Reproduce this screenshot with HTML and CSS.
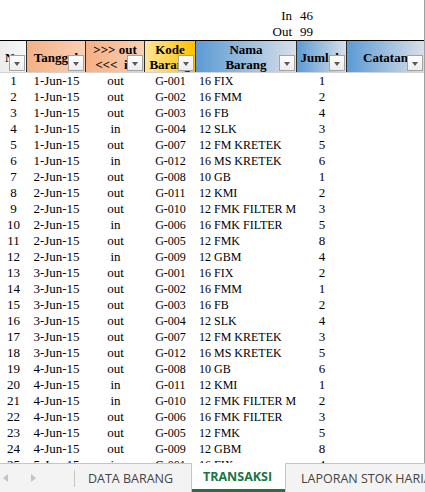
FILE: index.html
```html
<!DOCTYPE html>
<html>
<head>
<meta charset="utf-8">
<link rel="stylesheet" href="styles.css">
</head>
<body>
<div class="app">
  <div class="sheet">
    <div class="summary">
      <div class="grid sum-row"><span class="sum-label">In</span><span class="sum-val">46</span></div>
      <div class="grid sum-row"><span class="sum-label">Out</span><span class="sum-val">99</span></div>
    </div>
    <div class="grid head">
      <div class="hc h-no">No<span class="fb"></span></div>
      <div class="hc h-sal">Tanggal<span class="fb"></span></div>
      <div class="hc h-sal h-io">&gt;&gt;&gt; out<br>&lt;&lt;&lt; &nbsp;in<span class="fb"></span></div>
      <div class="hc h-yel">Kode<br>Barang<span class="fb"></span></div>
      <div class="hc h-blue">Nama<br>Barang<span class="fb"></span></div>
      <div class="hc h-blue">Jumlah<span class="fb"></span></div>
      <div class="hc h-blue last">Catatan<span class="fb"></span></div>
    </div>
    <div class="body">
      <div class="grid r"><span>1</span><span>1-Jun-15</span><span>out</span><span class="kd">G-001</span><span class="nm">16 FIX</span><span>1</span><span></span></div>
      <div class="grid r"><span>2</span><span>1-Jun-15</span><span>out</span><span class="kd">G-002</span><span class="nm">16 FMM</span><span>2</span><span></span></div>
      <div class="grid r"><span>3</span><span>1-Jun-15</span><span>out</span><span class="kd">G-003</span><span class="nm">16 FB</span><span>4</span><span></span></div>
      <div class="grid r"><span>4</span><span>1-Jun-15</span><span>in</span><span class="kd">G-004</span><span class="nm">12 SLK</span><span>3</span><span></span></div>
      <div class="grid r"><span>5</span><span>1-Jun-15</span><span>out</span><span class="kd">G-007</span><span class="nm">12 FM KRETEK</span><span>5</span><span></span></div>
      <div class="grid r"><span>6</span><span>1-Jun-15</span><span>in</span><span class="kd">G-012</span><span class="nm">16 MS KRETEK</span><span>6</span><span></span></div>
      <div class="grid r"><span>7</span><span>2-Jun-15</span><span>out</span><span class="kd">G-008</span><span class="nm">10 GB</span><span>1</span><span></span></div>
      <div class="grid r"><span>8</span><span>2-Jun-15</span><span>out</span><span class="kd">G-011</span><span class="nm">12 KMI</span><span>2</span><span></span></div>
      <div class="grid r"><span>9</span><span>2-Jun-15</span><span>out</span><span class="kd">G-010</span><span class="nm">12 FMK FILTER M</span><span>3</span><span></span></div>
      <div class="grid r"><span>10</span><span>2-Jun-15</span><span>in</span><span class="kd">G-006</span><span class="nm">16 FMK FILTER</span><span>5</span><span></span></div>
      <div class="grid r"><span>11</span><span>2-Jun-15</span><span>out</span><span class="kd">G-005</span><span class="nm">12 FMK</span><span>8</span><span></span></div>
      <div class="grid r"><span>12</span><span>2-Jun-15</span><span>in</span><span class="kd">G-009</span><span class="nm">12 GBM</span><span>4</span><span></span></div>
      <div class="grid r"><span>13</span><span>3-Jun-15</span><span>out</span><span class="kd">G-001</span><span class="nm">16 FIX</span><span>2</span><span></span></div>
      <div class="grid r"><span>14</span><span>3-Jun-15</span><span>out</span><span class="kd">G-002</span><span class="nm">16 FMM</span><span>1</span><span></span></div>
      <div class="grid r"><span>15</span><span>3-Jun-15</span><span>out</span><span class="kd">G-003</span><span class="nm">16 FB</span><span>2</span><span></span></div>
      <div class="grid r"><span>16</span><span>3-Jun-15</span><span>out</span><span class="kd">G-004</span><span class="nm">12 SLK</span><span>4</span><span></span></div>
      <div class="grid r"><span>17</span><span>3-Jun-15</span><span>out</span><span class="kd">G-007</span><span class="nm">12 FM KRETEK</span><span>3</span><span></span></div>
      <div class="grid r"><span>18</span><span>3-Jun-15</span><span>out</span><span class="kd">G-012</span><span class="nm">16 MS KRETEK</span><span>5</span><span></span></div>
      <div class="grid r"><span>19</span><span>4-Jun-15</span><span>out</span><span class="kd">G-008</span><span class="nm">10 GB</span><span>6</span><span></span></div>
      <div class="grid r"><span>20</span><span>4-Jun-15</span><span>in</span><span class="kd">G-011</span><span class="nm">12 KMI</span><span>1</span><span></span></div>
      <div class="grid r"><span>21</span><span>4-Jun-15</span><span>in</span><span class="kd">G-010</span><span class="nm">12 FMK FILTER M</span><span>2</span><span></span></div>
      <div class="grid r"><span>22</span><span>4-Jun-15</span><span>out</span><span class="kd">G-006</span><span class="nm">16 FMK FILTER</span><span>3</span><span></span></div>
      <div class="grid r"><span>23</span><span>4-Jun-15</span><span>out</span><span class="kd">G-005</span><span class="nm">12 FMK</span><span>5</span><span></span></div>
      <div class="grid r"><span>24</span><span>4-Jun-15</span><span>out</span><span class="kd">G-009</span><span class="nm">12 GBM</span><span>8</span><span></span></div>
      <div class="grid r"><span>25</span><span>5-Jun-15</span><span>in</span><span class="kd">G-001</span><span class="nm">16 FIX</span><span>4</span><span></span></div>
    </div>
  </div>
  <div class="tabs">
    <div class="nav">
      <svg width="75" height="28" viewBox="0 0 75 28"><polygon points="8,10 8,18 3,14" fill="#c4c4c4"/><polygon points="31,10 31,18 36,14" fill="#c4c4c4"/></svg>
    </div>
    <div class="tab first">DATA BARANG</div>
    <div class="tab active">TRANSAKSI</div>
    <div class="tab rest">LAPORAN STOK HARIAN</div>
  </div>
</div>
</body>
</html>
```
FILE: styles.css
```css
html, body {
  margin: 0;
  padding: 0;
  background: #fff;
}
body {
  width: 425px;
  height: 492px;
  overflow: hidden;
  font-family: "Liberation Serif", "Times New Roman", serif;
  color: #000;
}
.app {
  display: flex;
  flex-direction: column;
  height: 492px;
}
.sheet {
  height: 463px;
  width: 425px;
  box-sizing: border-box;
  overflow: hidden;
  border-right: 1px solid #a0a0a0;
  flex: none;
}
.grid {
  display: grid;
  grid-template-columns: 27px 59px 59px 51px 101px 50px 77px;
}
.summary {
  padding-top: 8px;
}
.sum-row {
  height: 16px;
  line-height: 16px;
  font-size: 13px;
}
.sum-label {
  grid-column: 5;
  text-align: right;
  padding-right: 5px;
}
.sum-val {
  grid-column: 6;
  padding-left: 3px;
}
.head {
  border-top: 1px solid #000;
  border-bottom: 1px solid #d4d4d4;
  height: 33px;
  box-sizing: border-box;
}
.hc {
  position: relative;
  display: flex;
  align-items: center;
  justify-content: center;
  text-align: center;
  font-weight: bold;
  font-size: 13px;
  line-height: 15px;
  border-right: 1px solid #2a2a2a;
  box-sizing: border-box;
  white-space: nowrap;
  overflow: hidden;
  padding-top: 1px;
}
.hc.last {
  border-right: none;
}
.h-no {
  background: linear-gradient(90deg, #ececec, #f7f7f7);
}
.h-sal {
  background: linear-gradient(90deg, #f4b084, #f9d0b4);
}
.h-yel {
  background: linear-gradient(90deg, #ffe699, #ffc000);
}
.h-blue {
  background: linear-gradient(90deg, #5b9bd5, #d8dfe8);
}
.fb {
  position: absolute;
  right: 1px;
  bottom: 1px;
  width: 16px;
  height: 16px;
  box-sizing: border-box;
  border: 1px solid #a3a3a3;
  background: linear-gradient(180deg, #ffffff, #ececec);
}
.fb::after {
  content: "";
  position: absolute;
  left: 4px;
  top: 6px;
  border-left: 3.5px solid transparent;
  border-right: 3.5px solid transparent;
  border-top: 4px solid #5a5a5a;
}
.r {
  height: 16px;
  line-height: 16px;
  font-size: 13px;
}
.r span {
  text-align: center;
  white-space: nowrap;
  overflow: hidden;
}
.r .kd {
  font-size: 12px;
}
.r .nm {
  text-align: left;
  padding-left: 3px;
  font-size: 12px;
}
.tabs {
  flex: none;
  height: 29px;
  display: flex;
  background: #f3f3f3;
  font-family: "Open Sans", "Noto Sans", sans-serif;
  font-size: 12.5px;
  color: #444;
  overflow: hidden;
  white-space: nowrap;
}
.nav {
  width: 75px;
  flex: none;
  border-top: 1px solid #c6c6c6;
  position: relative;
}
.nav svg {
  display: block;
}
.nav::after {
  content: "";
  position: absolute;
  right: 0;
  top: 6px;
  height: 17px;
  border-right: 1px solid #c6c6c6;
}
.tab {
  box-sizing: border-box;
  display: flex;
  align-items: center;
  flex: none;
}
.tab.first {
  width: 117px;
  padding-left: 13px;
  border-top: 1px solid #c6c6c6;
  border-right: 1px solid #c6c6c6;
}
.tab.active {
  width: 93px;
  padding-left: 11px;
  background: #fff;
  color: #217346;
  font-weight: bold;
  border-bottom: 3px solid #217346;
}
.tab.rest {
  padding-left: 15px;
  border-top: 1px solid #c6c6c6;
  border-left: 1px solid #c6c6c6;
  flex: 1;
  overflow: hidden;
}
```
